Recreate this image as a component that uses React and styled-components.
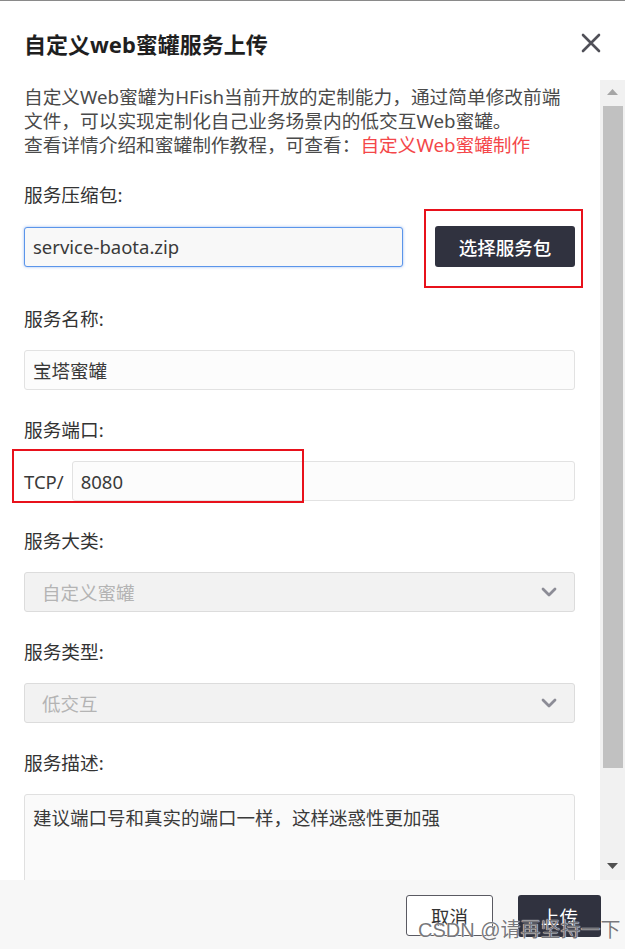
import styled, { createGlobalStyle } from "styled-components";

const GlobalStyle = createGlobalStyle`
  html, body {
    margin: 0;
    padding: 0;
    background: #ffffff;
  }
  body {
    font-family: "Noto Sans", "Noto Sans CJK SC", sans-serif;
  }
  * {
    box-sizing: border-box;
  }
`;

const FONT = `"Noto Sans", "Noto Sans CJK SC", sans-serif`;

export default function App() {
  return (
    <>
      <GlobalStyle />
      <Dialog>
        <Header>
          <Title>自定义web蜜罐服务上传</Title>
          <CloseButton aria-label="关闭">
            <svg width="20" height="20" viewBox="0 0 20 20">
              <path
                d="M2 2 L18 18 M18 2 L2 18"
                stroke="#505058"
                strokeWidth="2.6"
                strokeLinecap="round"
              />
            </svg>
          </CloseButton>
        </Header>

        <Body>
          <Content>
            <Intro>
              自定义Web蜜罐为HFish当前开放的定制能力，通过简单修改前端文件，可以实现定制化自己业务场景内的低交互Web蜜罐。
              <br />
              查看详情介绍和蜜罐制作教程，可查看：
              <IntroLink>自定义Web蜜罐制作</IntroLink>
            </Intro>

            <Field $gap={40}>
              <Label>服务压缩包:</Label>
              <UploadRow>
                <TextInput $focused readOnly defaultValue="service-baota.zip" />
                <ChooseWrap>
                  <ChooseButton>选择服务包</ChooseButton>
                  <Mark $top={-17} $right={-8} $bottom={-21} $left={-11} />
                </ChooseWrap>
              </UploadRow>
            </Field>

            <Field>
              <Label>服务名称:</Label>
              <TextInput readOnly defaultValue="宝塔蜜罐" />
            </Field>

            <Field>
              <Label>服务端口:</Label>
              <PortRow>
                <PortPrefix>TCP/</PortPrefix>
                <TextInput readOnly defaultValue="8080" />
                <Mark $top={-12} $left={-12} $width={292} $height={54} />
              </PortRow>
            </Field>

            <Field>
              <Label>服务大类:</Label>
              <SelectBox>
                <span>自定义蜜罐</span>
                <Chevron />
              </SelectBox>
            </Field>

            <Field>
              <Label>服务类型:</Label>
              <SelectBox>
                <span>低交互</span>
                <Chevron />
              </SelectBox>
            </Field>

            <Field>
              <Label>服务描述:</Label>
              <TextArea
                readOnly
                defaultValue="建议端口号和真实的端口一样，这样迷惑性更加强"
              />
            </Field>
          </Content>

          <ScrollTrack>
            <ScrollArrow>
              <svg width="11" height="6" viewBox="0 0 11 6">
                <path d="M0 6 L5.5 0 L11 6 Z" fill="#a6a6a6" />
              </svg>
            </ScrollArrow>
            <ScrollThumb />
            <ScrollArrow $bottom>
              <svg width="11" height="6" viewBox="0 0 11 6">
                <path d="M0 0 L5.5 6 L11 0 Z" fill="#505050" />
              </svg>
            </ScrollArrow>
          </ScrollTrack>
        </Body>

        <Footer>
          <GhostButton>取消</GhostButton>
          <DarkButton>上传</DarkButton>
          <Watermark>CSDN @请再坚持一下</Watermark>
        </Footer>
      </Dialog>
    </>
  );
}

function Chevron() {
  return (
    <svg width="16" height="10" viewBox="0 0 16 10">
      <path
        d="M2 2 L8 8 L14 2"
        fill="none"
        stroke="#8c8c96"
        strokeWidth="2.8"
        strokeLinecap="round"
        strokeLinejoin="round"
      />
    </svg>
  );
}

const Dialog = styled.div`
  width: 625px;
  height: 949px;
  display: flex;
  flex-direction: column;
  background: #ffffff;
  border-top: 1px solid #8a8a8a;
  overflow: hidden;
  font-family: ${FONT};
`;

const Header = styled.div`
  height: 79px;
  flex-shrink: 0;
  display: flex;
  align-items: center;
  justify-content: space-between;
  padding: 4px 24px 0 24px;
`;

const Title = styled.h3`
  margin: 0;
  font-size: 22px;
  font-weight: 700;
  color: #1f1f1f;
  letter-spacing: 0;
`;

const CloseButton = styled.button`
  border: none;
  background: none;
  padding: 0;
  width: 20px;
  height: 20px;
  display: flex;
  cursor: pointer;
`;

const Body = styled.div`
  height: 800px;
  flex-shrink: 0;
  display: flex;
  overflow: hidden;
`;

const Content = styled.div`
  flex: 1;
  padding: 5px 25px 0 24px;
  overflow: hidden;
`;

const Intro = styled.p`
  margin: 0 0 26px 0;
  font-size: 18.7px;
  line-height: 24px;
  color: #4a4a4a;
`;

const IntroLink = styled.span`
  color: #f4474a;
  cursor: pointer;
`;

const Field = styled.div`
  margin-bottom: ${(p) => p.$gap || 28}px;
`;

const Label = styled.div`
  font-size: 18.7px;
  line-height: 24px;
  color: #333333;
  margin-bottom: 19px;
`;

const TextInput = styled.input`
  display: block;
  width: 100%;
  flex: 1;
  min-width: 0;
  height: 40px;
  padding: 0 8px;
  font-family: ${FONT};
  font-size: 18.5px;
  color: #3a3a3a;
  background: ${(p) => (p.$focused ? "#f8f8f8" : "#fcfcfc")};
  border: 1px solid ${(p) => (p.$focused ? "#5b95ea" : "#e2e2e2")};
  border-radius: 3px;
  box-shadow: ${(p) =>
    p.$focused ? "0 0 3px rgba(70, 130, 230, 0.55)" : "none"};
  outline: none;
`;

const UploadRow = styled.div`
  display: flex;
  align-items: center;
  gap: 32px;
`;

const ChooseWrap = styled.div`
  position: relative;
  flex-shrink: 0;
`;

const ChooseButton = styled.button`
  display: block;
  width: 140px;
  height: 41px;
  border: none;
  border-radius: 3px;
  background: #30323f;
  color: #ffffff;
  font-family: ${FONT};
  font-size: 18.5px;
  font-weight: 500;
  cursor: pointer;
`;

const Mark = styled.div`
  position: absolute;
  top: ${(p) => p.$top}px;
  left: ${(p) => p.$left}px;
  ${(p) => (p.$right !== undefined ? `right: ${p.$right}px;` : "")}
  ${(p) => (p.$bottom !== undefined ? `bottom: ${p.$bottom}px;` : "")}
  ${(p) => (p.$width ? `width: ${p.$width}px;` : "")}
  ${(p) => (p.$height ? `height: ${p.$height}px;` : "")}
  border: 2px solid #e8111b;
  pointer-events: none;
`;

const PortRow = styled.div`
  position: relative;
  display: flex;
  align-items: center;
  gap: 8px;
`;

const PortPrefix = styled.span`
  font-size: 18.5px;
  color: #3a3a3a;
  flex-shrink: 0;
`;

const SelectBox = styled.div`
  height: 40px;
  display: flex;
  align-items: center;
  justify-content: space-between;
  padding: 0 17px 0 17px;
  background: #f2f2f2;
  border: 1px solid #dcdcdc;
  border-radius: 3px;
  font-size: 18.5px;
  color: #b4b4b4;
`;

const TextArea = styled.textarea`
  display: block;
  width: 100%;
  height: 120px;
  padding: 10px 8px;
  font-family: ${FONT};
  font-size: 18.5px;
  line-height: 26px;
  color: #3a3a3a;
  background: #fafafa;
  border: 1px solid #e0e0e0;
  border-radius: 3px;
  resize: none;
  outline: none;
`;

const ScrollTrack = styled.div`
  width: 25px;
  flex-shrink: 0;
  display: flex;
  flex-direction: column;
  align-items: center;
  background: #f1f1f1;
`;

const ScrollArrow = styled.div`
  width: 100%;
  height: ${(p) => (p.$bottom ? 23 : 26)}px;
  margin-top: ${(p) => (p.$bottom ? "auto" : "0")};
  display: flex;
  align-items: center;
  justify-content: center;
  padding-bottom: ${(p) => (p.$bottom ? 6 : 2)}px;
`;

const ScrollThumb = styled.div`
  width: 20px;
  height: 662px;
  background: #c1c1c1;
`;

const Footer = styled.div`
  position: relative;
  flex: 1;
  display: flex;
  justify-content: flex-end;
  align-items: flex-start;
  gap: 25px;
  padding: 15px 24px 0 0;
  background: #f7f7f7;
`;

const GhostButton = styled.button`
  width: 87px;
  height: 41px;
  background: #ffffff;
  border: 1.5px solid #5a5a62;
  border-radius: 3px;
  font-family: ${FONT};
  font-size: 18.5px;
  color: #333333;
  cursor: pointer;
`;

const DarkButton = styled.button`
  width: 83px;
  height: 42px;
  background: #30323f;
  border: none;
  border-radius: 3px;
  font-family: ${FONT};
  font-size: 18.5px;
  color: #ffffff;
  cursor: pointer;
`;

const Watermark = styled.span`
  position: absolute;
  left: 418px;
  top: 38px;
  font-family: "Liberation Sans", "Noto Sans CJK SC", sans-serif;
  font-size: 20px;
  line-height: 24px;
  color: rgba(95, 95, 100, 0.85);
  text-shadow: 0 0 1px #ffffff, 0 0 1px #ffffff;
  pointer-events: none;
  white-space: nowrap;
`;
